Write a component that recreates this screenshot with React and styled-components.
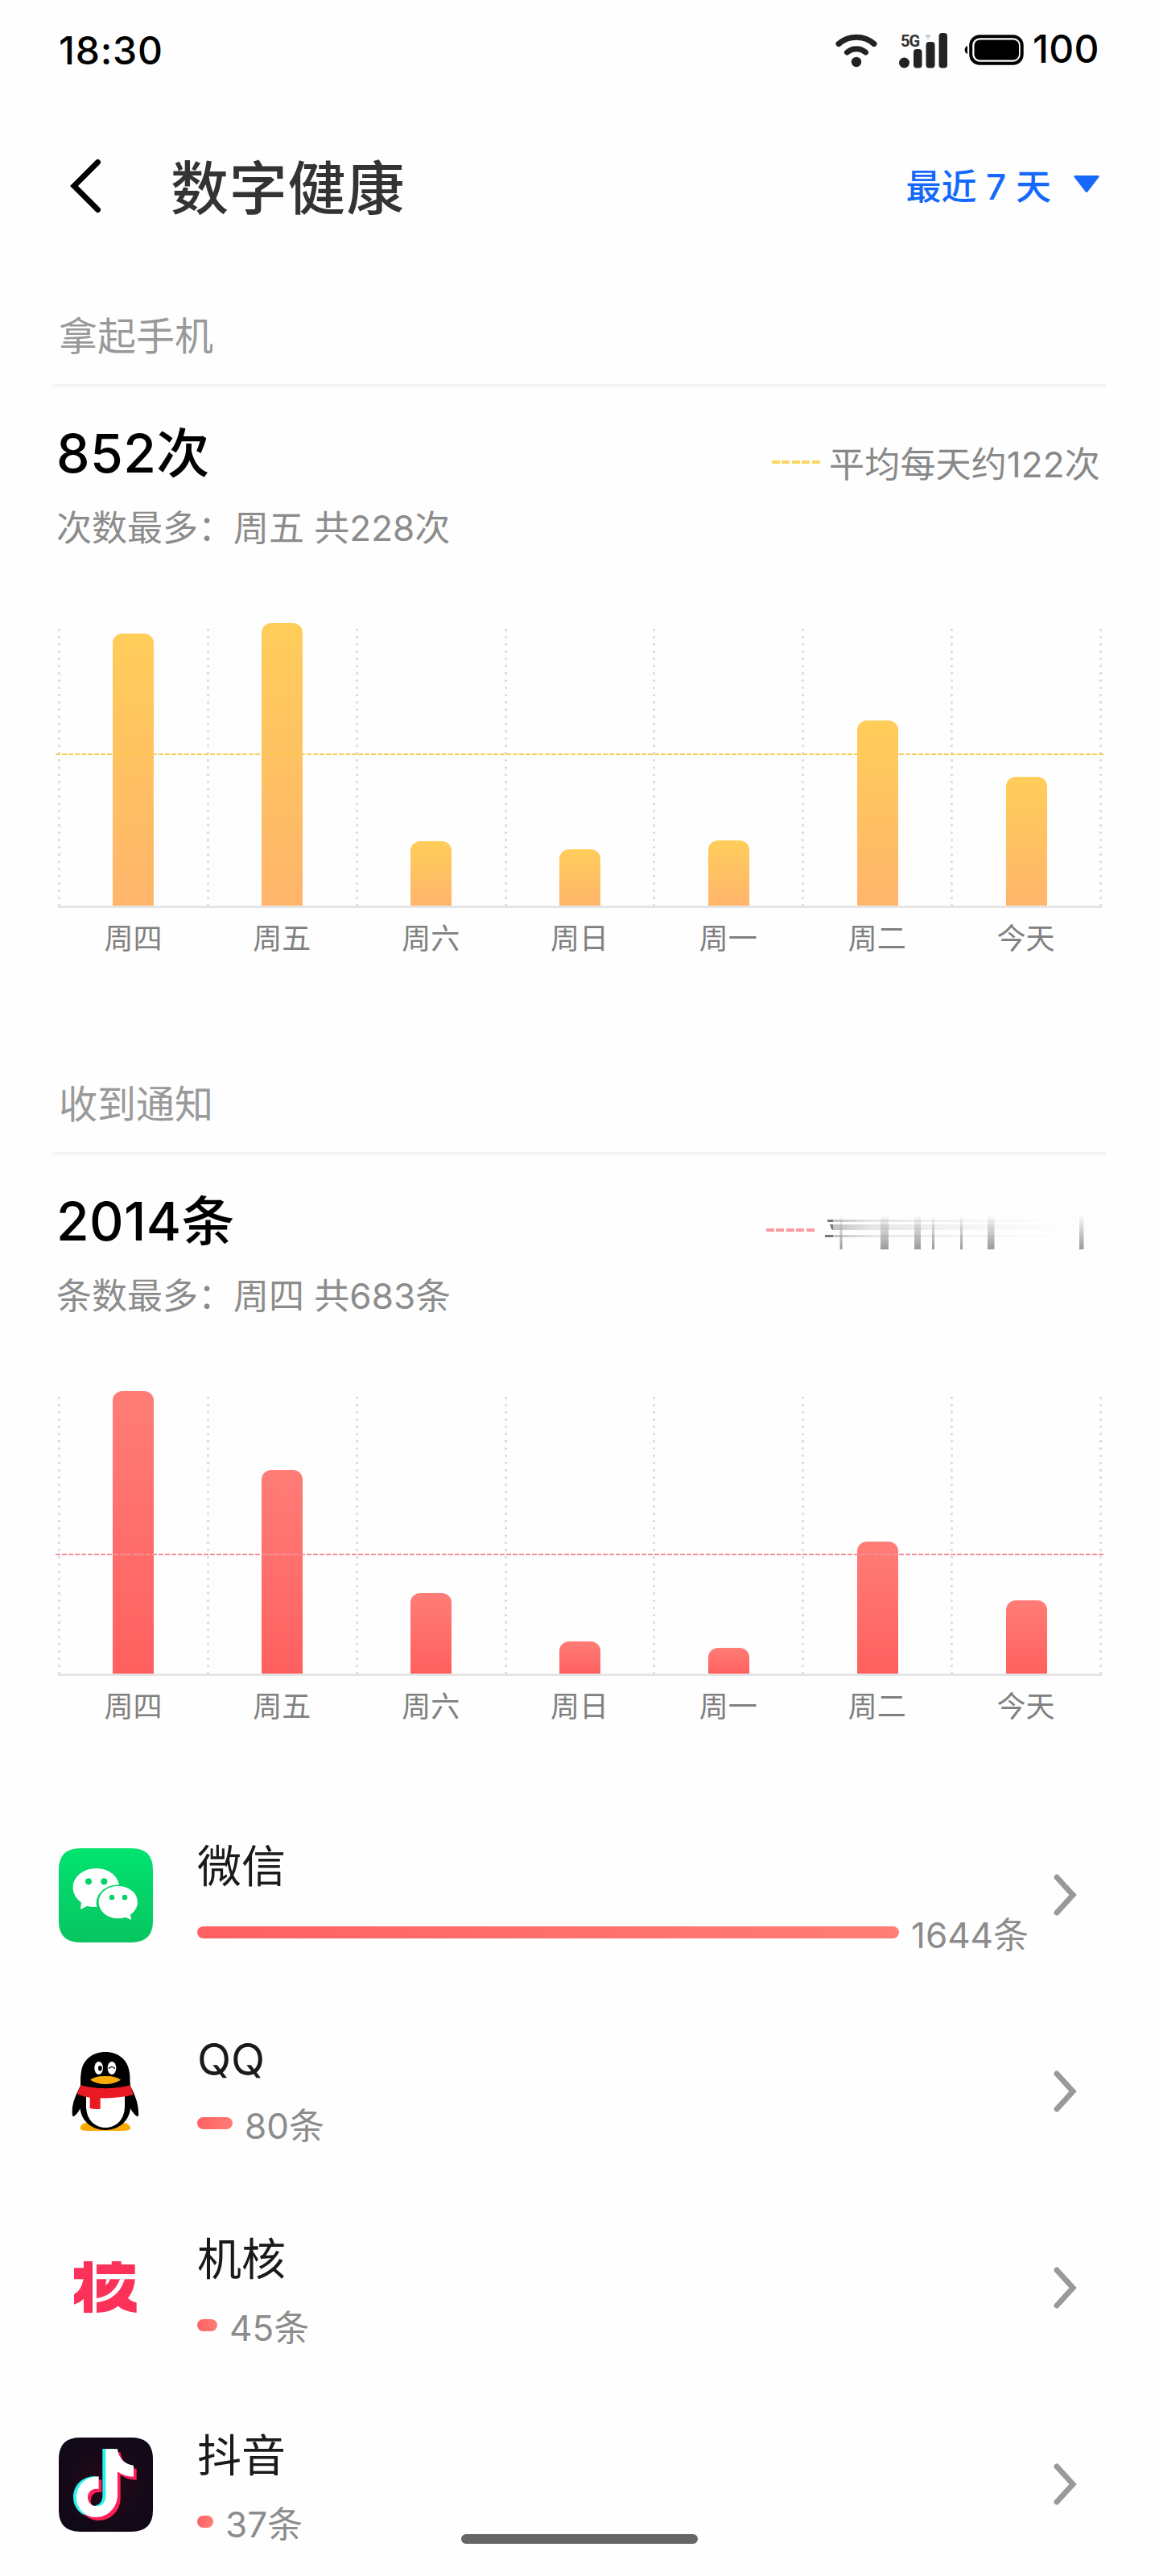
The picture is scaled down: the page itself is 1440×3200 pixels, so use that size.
import styled, { createGlobalStyle, css } from "styled-components"

const GlobalStyle = createGlobalStyle`
    * {
        box-sizing: border-box;
    }
    body {
        margin: 0;
        background-color: #fefefe;
        font-family: Inter, "Noto Sans CJK SC", sans-serif;
    }
    svg {
        display: block;
        flex-shrink: 0;
    }
`;

const Page = styled.div`
    position: relative;
    width: 1440px;
    height: 3200px;
    overflow: hidden;
    background-color: #fefefe;
`;

const StatusBar = styled.div`
    height: 125px;
    padding: 0 74px 0 73px;
    display: flex;
    align-items: center;
    justify-content: space-between;
    font-size: 48px;
    font-weight: 450;
    line-height: 60px;
    color: #000;
`;

const Time = styled.span`
    letter-spacing: 0.8px;
`;

const StatusIcons = styled.div`
    display: flex;
    align-items: center;
`;

const Battery = styled.span`
    margin-left: 11px;
    padding-bottom: 3px;
    letter-spacing: 0.4px;
`;

const Header = styled.div`
    height: 215px;
    padding: 0 74px 0 86px;
    display: flex;
    align-items: center;
`;

const Title = styled.h1`
    margin: 3px 0 0 84px;
    flex: 1;
    font-size: 72px;
    font-weight: 500;
    line-height: 90px;
    letter-spacing: 0.8px;
    color: #333;
`;

const Range = styled.div`
    display: flex;
    align-items: center;
    gap: 28px;
    margin-bottom: 1px;
    font-size: 44px;
    font-weight: 500;
    line-height: 60px;
    color: #1568fb;
`;

const Section = styled.section`
    height: ${(p) => p.$height}px;
    padding: 47px 71px 0 72px;
`;

const SectionName = styled.h2`
    margin: 1px 0 -1px 1px;
    font-size: 48px;
    font-weight: 400;
    line-height: 60px;
    color: #999;
`;

const Divider = styled.div`
    height: 4px;
    margin: 30px -5px 0 -6px;
    background-color: #f5f5f5;
`;

const Summary = styled.div`
    display: flex;
    justify-content: space-between;
    padding-top: 42px;
    margin-left: -2px;
`;

const Total = styled.div`
    font-size: 66px;
    font-weight: 500;
    line-height: 80px;
    letter-spacing: 0.4px;
    color: #000;
`;

const Most = styled.div`
    margin-top: 28px;
    font-size: 44px;
    line-height: 50px;
    color: #8c8c8c;
`;

const Legend = styled.div`
    display: flex;
    align-items: center;
    height: 60px;
    margin: 24px 2px 0 0;
    font-size: 44px;
    line-height: 60px;
    letter-spacing: 0.15px;
    color: #888;
`;

const LegendDash = styled.div`
    width: 60px;
    height: 4px;
    margin: 0 ${(p) => p.$gap}px 6px 0;
    background: repeating-linear-gradient(to right, ${(p) => p.$color} 0 10px, transparent 10px 12.4px);
`;

const dots = css`
    background-image: radial-gradient(circle at 1.5px 1.5px, #dadada 1.2px, transparent 1.8px);
    background-size: 3px 9px;
    background-repeat: repeat-y;
`;

const Plot = styled.div`
    position: relative;
    display: flex;
    align-items: flex-end;
    height: 354px;
    margin-top: 93px;
    border-bottom: 3px solid #e5e5e5;
`;

const Column = styled.div`
    ${dots}
    flex: 1;
    height: 344px;
    padding-left: 3px;
    display: flex;
    align-items: flex-end;
    justify-content: center;
`;

const LastLine = styled.div`
    ${dots}
    width: 3px;
    height: 344px;
`;

const Bar = styled.div`
    flex-shrink: 0;
    width: 51px;
    border-radius: 12px 12px 0 0;
    background: linear-gradient(to bottom, ${(p) => p.$from}, ${(p) => p.$to});
`;

const Average = styled.div`
    position: absolute;
    left: -3px;
    right: -3px;
    height: 2px;
    background: repeating-linear-gradient(to right, ${(p) => p.$color} 0 6px, transparent 6px 8px);
`;

const Days = styled.div`
    display: flex;
    margin: 13px 2px 0 1px;
    font-size: 36px;
    line-height: 50px;
    color: #808080;
    text-align: center;

    span {
        flex: 1;
    }
`;

const AppRow = styled.div`
    height: 244px;
    padding: 0 102px 0 73px;
    display: flex;
    align-items: center;
`;

const AppInfo = styled.div`
    flex: 1;
    height: 142px;
    margin-left: 55px;
`;

const AppName = styled.div`
    font-size: 55px;
    line-height: ${(p) => (p.$latin ? 63 : 70)}px;
    color: #1a1a1a;
`;

const CountLine = styled.div`
    display: flex;
    align-items: center;
    gap: 15px;
    margin-top: 21px;
    font-size: 44px;
    line-height: 60px;
    color: #8c8c8c;
`;

const CountBar = styled.div`
    height: 15px;
    margin-bottom: 7px;
    border-radius: 8px;
    background: linear-gradient(to right, #ff6063, #ff7d76);
`;

const HomeIndicator = styled.div`
    position: absolute;
    left: 573px;
    bottom: 40px;
    width: 294px;
    height: 12px;
    border-radius: 6px;
    background-color: #666;
`;

const days = ["周四", "周五", "周六", "周日", "周一", "周二", "今天"];

const pickups = {
    heights: [338, 351, 80, 70, 81, 230, 160],
    average: 187,
    from: "#ffcd5a",
    to: "#ffb56b",
    line: "#f8cc55",
};

const notices = {
    heights: [351, 253, 100, 40, 32, 164, 91],
    average: 147,
    from: "#ff7d77",
    to: "#ff605f",
    line: "#f2909a",
};

const apps = [
    { name: "微信", count: "1644条", width: 872, Icon: WechatIcon },
    { name: "QQ", count: "80条", width: 44, Icon: QQIcon, latin: true },
    { name: "机核", count: "45条", width: 25, Icon: GcoresIcon },
    { name: "抖音", count: "37条", width: 20, Icon: DouyinIcon },
];

function Wifi() {
    return (
        <svg width="52" height="42" viewBox="0 0 52 42" fill="none" stroke="#222" strokeLinecap="round">
            <path d="M4 12.5C16.5 1.500 35.500 1.500 48 12.500" strokeWidth="7" />
            <path d="M14.500 23C21 17.200 31 17.200 37.500 23" strokeWidth="7" />
            <circle cx="26" cy="35" r="6.200" fill="#222" stroke="none" />
        </svg>
    )
}

const SignalWrap = styled.div`
    position: relative;
    margin-left: 27px;
`;

const NetType = styled.span`
    position: absolute;
    left: 2px;
    top: 0;
    font-family: Roboto, sans-serif;
    font-size: 20px;
    font-weight: 700;
    line-height: 20px;
    letter-spacing: -1px;
    color: #333;
`;

function Signal() {
    return (
        <SignalWrap>
            <NetType>5G</NetType>
            <svg width="61" height="44" viewBox="0 0 61 44" fill="#222">
                <circle cx="6.500" cy="37" r="6.500" />
                <rect x="18" y="20" width="10.500" height="23.500" rx="4" />
                <rect x="33.500" y="11" width="11" height="32.500" rx="4" />
                <rect x="49.500" y="0" width="10.500" height="43.500" rx="4" />
                <path d="M32 2h8l-4 6z" fill="#ccc" />
            </svg>
        </SignalWrap>
    )
}

const BatteryShape = styled.svg`
    margin: 0 0 1px 20px;
`;

function BatteryIcon() {
    return (
        <BatteryShape width="74" height="38" viewBox="0 0 74 38">
            <path d="M4 14C-0.500 15.500 -0.500 22.500 4 24z" />
            <rect x="8.200" y="2.200" width="63.500" height="33.500" rx="11" fill="none" stroke="#000" strokeWidth="4" />
            <rect x="12.500" y="6.500" width="55.500" height="25" rx="7" />
        </BatteryShape>
    )
}

const BackShape = styled.svg`
    margin-bottom: 4px;
`;

function BackIcon() {
    return (
        <BackShape width="42" height="70" viewBox="0 0 42 70" fill="none" stroke="#000" strokeWidth="7" strokeLinecap="round">
            <path d="M35.500 5.500L6 35L35.500 64.500" />
        </BackShape>
    )
}

const TriangleShape = styled.svg`
    margin-bottom: 4px;
`;

function Triangle() {
    return (
        <TriangleShape width="32" height="24" viewBox="0 0 32 24" fill="#1568fb">
            <path d="M1.500 0H30.500Q32.500 0.500 31 2.500L17.500 20Q16 22 14.500 20L1 2.500Q-0.500 0.500 1.500 0Z" />
        </TriangleShape>
    )
}

function Chevron() {
    return (
        <svg width="29" height="54" viewBox="0 0 29 54" fill="none" stroke="#999" strokeWidth="7" strokeLinecap="round">
            <path d="M4 5L24 27L4 49" />
        </svg>
    )
}

// the second legend is drawn as a faded smear instead of a label
function Smear() {
    return (
        <svg width="342" height="44" viewBox="0 0 342 44">
            <defs>
                <linearGradient id="smearV" x1="0" y1="0" x2="0" y2="1">
                    <stop offset="0" stopColor="#999" stopOpacity="0" />
                    <stop offset="1" stopColor="#999" />
                </linearGradient>
                <linearGradient id="smearH" x1="0" y1="0" x2="1" y2="0">
                    <stop offset="0" stopColor="#999" stopOpacity="0.600" />
                    <stop offset="0.150" stopColor="#ccc" stopOpacity="0.500" />
                    <stop offset="0.550" stopColor="#ddd" stopOpacity="0.250" />
                    <stop offset="1" stopColor="#eee" stopOpacity="0" />
                </linearGradient>
            </defs>
            <g fill="url(#smearH)">
                <rect x="9" y="6" width="333" height="3" />
                <rect x="9" y="12" width="333" height="7" />
                <rect x="9" y="25" width="333" height="3" />
            </g>
            <g fill="#777">
                <rect x="3" y="6" width="7" height="3" />
                <path d="M6 12h4v7l-2-1z" />
                <rect x="0" y="25" width="10" height="3" />
            </g>
            <g fill="url(#smearV)">
                <rect x="18.500" y="0" width="3" height="43" />
                <rect x="69" y="0" width="10" height="43" />
                <rect x="111" y="0" width="8" height="43" />
                <rect x="133" y="0" width="3" height="43" />
                <rect x="168" y="0" width="3" height="43" />
                <rect x="202" y="0" width="8.500" height="43" />
                <rect x="316" y="0" width="5.500" height="43" />
            </g>
        </svg>
    )
}

function WechatIcon() {
    return (
        <svg width="117" height="117" viewBox="0 0 351 351">
            <defs>
                <linearGradient id="wechat" x1="0" y1="0" x2="0" y2="1">
                    <stop offset="0" stopColor="#02e36f" />
                    <stop offset="1" stopColor="#07c560" />
                </linearGradient>
            </defs>
            <path d="M80 0H271Q351 0 351 80V271Q351 351 271 351H80Q0 351 0 271V80Q0 0 80 0Z" fill="url(#wechat)" />
            <path d="M140 75C92 75 53 106 53 146C53 169 65 188 84 202L81 228L106 215C118 218 130 220 142 219C132 176 168 136 225 136C218 100 184 75 140 75Z" fill="#fff" />
            <path d="M221 141C181 141 149 167 149 200C149 234 181 261 221 261C231 261 241 259 250 257L270 267L267 247C283 236 294 219 294 200C294 167 261 141 221 141Z" fill="#fff" />
            <g fill="#04d468">
                <circle cx="111" cy="124" r="12" />
                <circle cx="169" cy="124" r="12" />
                <circle cx="198" cy="183" r="10" />
                <circle cx="246" cy="183" r="10" />
            </g>
        </svg>
    )
}

function QQIcon() {
    return (
        <svg width="117" height="117" viewBox="0 0 351 351">
            <path d="M80 312Q80 290 120 288H230Q267 292 267 312Q266 320 240 321H106Q80 320 80 312Z" fill="#faab07" />
            <path d="M82 150C68 180 50 212 50 250C50 262 52 268 54 268C62 266 72 252 80 238C84 285 124 318 174 318C224 318 262 285 267 238C275 252 286 266 294 268C297 268 298 260 297 250C296 212 280 180 265 150Z" fill="#000" />
            <path d="M102 175V228C102 278 133 309 174 309C215 309 246 278 246 228V175Z" fill="#fff" />
            <path d="M82 158C80 128 82 110 84 100C90 56 126 27 174 27C221 27 257 56 263 100C266 114 266 134 265 158Z" fill="#000" />
            <path d="M82 150L69 184Q95 195 116 197V237Q135 242 155 239V199Q220 201 278 187L266 150Q174 174 82 150Z" fill="#eb1923" />
            <path d="M82 151Q174 174 266 151V140H82Z" fill="#000" />
            <ellipse cx="149" cy="87" rx="16" ry="24" fill="#fff" />
            <ellipse cx="198" cy="87" rx="16" ry="24" fill="#fff" />
            <ellipse cx="154" cy="88" rx="7" ry="10" fill="#000" />
            <path d="M187 88Q197 78 208 88" fill="none" stroke="#000" strokeWidth="4" strokeLinecap="round" />
            <path d="M117 131Q135 116 174 117Q215 116 231 131Q205 147 174 147Q143 147 117 131Z" fill="#faab07" />
        </svg>
    )
}

function GcoresIcon() {
    return (
        <svg width="117" height="117" viewBox="0 0 351 351" fill="#fb3159">
            <path d="M93 75H126V267H93V215Q80 228 57 236V198Q84 186 92 142H57V100H93Z" />
            <path d="M141 87H197V75H233V87H284V123H141Z" />
            <path d="M141 142H178L174 164L185 156L191 142H228Q204 205 141 213Z" />
            <path d="M246 142H284Q283 180 258 213Q270 225 290 229V267Q245 263 221 242Q195 265 141 267V229Q222 219 246 142Z" />
        </svg>
    )
}

const note = "M175 0H219C222 30 243 57 279 61V103C256 103 236 96 219 84V170C219 217 184 254 139 254C95 254 66 219 66 181C66 137 98 102 149 102V149C124 144 108 160 108 180C108 199 122 213 141 213C161 213 175 198 175 175Z";

function DouyinIcon() {
    return (
        <svg width="117" height="117" viewBox="0 0 351 351">
            <defs>
                <radialGradient id="douyin">
                    <stop offset="0" stopColor="#27081a" />
                    <stop offset="1" stopColor="#110917" />
                </radialGradient>
            </defs>
            <path d="M80 0H271Q351 0 351 80V271Q351 351 271 351H80Q0 351 0 271V80Q0 0 80 0Z" fill="url(#douyin)" />
            <path d={note} fill="#25f4ee" transform="translate(-1 42) translate(-11 0)" />
            <path d={note} fill="#fe1f57" transform="translate(11 55)" />
            <path d={note} fill="#fff" transform="translate(0 43)" />
        </svg>
    )
}

function Chart({ data }) {
    return (
        <>
            <Plot>
                {data.heights.map((h, i) => (
                    <Column key={days[i]}>
                        <Bar $from={data.from} $to={data.to} style={{ height: h }} />
                    </Column>
                ))}
                <LastLine />
                <Average $color={data.line} style={{ bottom: data.average }} />
            </Plot>
            <Days>
                {days.map((d) => (
                    <span key={d}>{d}</span>
                ))}
            </Days>
        </>
    )
}

export default function App() {
  return (
    <Page>
        <GlobalStyle />
        <StatusBar>
            <Time>18:30</Time>
            <StatusIcons>
                <Wifi />
                <Signal />
                <BatteryIcon />
                <Battery>100</Battery>
            </StatusIcons>
        </StatusBar>
        <Header>
            <BackIcon />
            <Title>数字健康</Title>
            <Range>
                最近 7 天
                <Triangle />
            </Range>
        </Header>

        <Section $height={954}>
            <SectionName>拿起手机</SectionName>
            <Divider />
            <Summary>
                <div>
                    <Total>852次</Total>
                    <Most>次数最多：周五 共228次</Most>
                </div>
                <Legend>
                    <LegendDash $color="#fbd662" $gap={11} />
                    平均每天约122次
                </Legend>
            </Summary>
            <Chart data={pickups} />
        </Section>

        <Section $height={938}>
            <SectionName>收到通知</SectionName>
            <Divider />
            <Summary>
                <div>
                    <Total>2014条</Total>
                    <Most>条数最多：周四 共683条</Most>
                </div>
                <Legend>
                    <LegendDash $color="#fb9ba0" $gap={13} />
                    <Smear />
                </Legend>
            </Summary>
            <Chart data={notices} />
        </Section>

        {apps.map(({ name, count, width, Icon, latin }) => (
            <AppRow key={name}>
                <Icon />
                <AppInfo>
                    <AppName $latin={latin}>{name}</AppName>
                    <CountLine>
                        <CountBar style={{ width }} />
                        {count}
                    </CountLine>
                </AppInfo>
                <Chevron />
            </AppRow>
        ))}
        <HomeIndicator />
    </Page>
  )
}
